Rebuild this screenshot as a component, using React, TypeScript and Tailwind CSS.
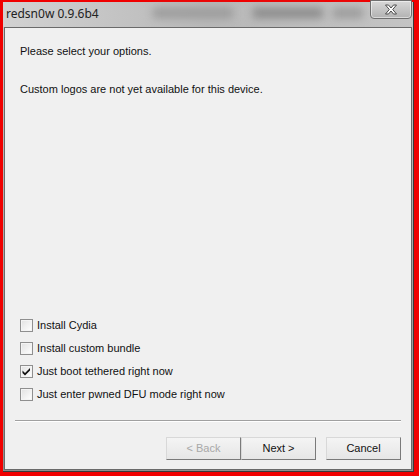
import React from "react";

const Check = ({ checked, label }: { checked?: boolean; label: string }) => (
  <div className="flex items-center h-[23px]">
    <div className="w-[13px] h-[13px] border border-[#8f8f8f] bg-gradient-to-br from-[#dcdcdc] to-[#ffffff] flex items-center justify-center">
      <div className="w-[11px] h-[11px] border border-[#f4f4f4] bg-gradient-to-br from-[#e4e4e4] to-[#fdfdfd] flex items-center justify-center">
        {checked && (
          <svg width="9" height="9" viewBox="0 0 9 9">
            <path d="M0.5 3.5 L3 6 L8 1 L8 3.5 L3 8.5 L0.5 6 Z" fill="#111" />
          </svg>
        )}
      </div>
    </div>
    <span className="ml-[4px] text-[11px] text-[#111]">{label}</span>
  </div>
);

const Btn = ({ children, disabled, w }: { children: React.ReactNode; disabled?: boolean; w: string }) => (
  <div
    className={`${w} h-[23px] flex items-center justify-center text-[11px] border border-t-[#d8d8d8] border-l-[#d8d8d8] border-r-[#7a7a7a] border-b-[#7a7a7a] bg-gradient-to-b from-[#f4f4f4] to-[#e6e6e6] ${
      disabled ? "text-[#a8a8a8]" : "text-[#111]"
    }`}
  >
    {children}
  </div>
);

export default function App() {
  return (
    <div
      className="w-[419px] h-[476px] bg-[#f00000] pl-[3px] pt-[2px] pr-[5px] pb-[4px]"
      style={{ fontFamily: '"Liberation Sans", Arial, sans-serif' }}
    >
      <div className="w-full h-full flex flex-col bg-gradient-to-b from-[#c9c9c9] via-[#a9a9a9] to-[#8e8e8e] border-r border-b border-[#3a3a3a]">
        {/* title bar */}
        <div className="relative h-[25px] flex items-center bg-gradient-to-r from-[#d2d2d2] via-[#b8b8b8] to-[#c4c4c4]">
          <div className="absolute left-[150px] top-[6px] w-[80px] h-[10px] bg-[#9a9a9a] blur-[4px]" />
          <div className="absolute left-[250px] top-[6px] w-[70px] h-[10px] bg-[#8a8a8a] blur-[4px]" />
          <div className="absolute left-[330px] top-[6px] w-[30px] h-[10px] bg-[#9a9a9a] blur-[4px]" />
          <span
            className="relative ml-[3px] mb-[1px] text-[12px] text-[#222]"
            style={{ fontFamily: '"Noto Sans", "Open Sans", sans-serif' }}
          >
            redsn0w 0.9.6b4
          </span>
          <div className="absolute right-[1px] top-[-2px] w-[42px] h-[19px] rounded-b-[4px] border border-[#6f6f6f] bg-gradient-to-b from-[#d8d8d8] to-[#b2b2b2] flex items-center justify-center shadow-[inset_0_0_0_1px_rgba(255,255,255,0.5)]">
            <svg width="14" height="11" viewBox="0 0 14 11">
              <path
                d="M1.5 1 L4.5 1 L7 4 L9.5 1 L12.5 1 L8.7 5.5 L12.5 10 L9.5 10 L7 7 L4.5 10 L1.5 10 L5.3 5.5 Z"
                fill="#ffffff"
                stroke="#4a4a4a"
                strokeWidth="1"
                strokeLinejoin="round"
              />
            </svg>
          </div>
        </div>
        {/* client */}
        <div className="flex-1 ml-[1px] mr-[1px] mb-[1px] border border-[#6a6a6a] bg-[#f0f0f0] flex flex-col">
          <div className="pl-[15px] pt-[15px] text-[11px] text-[#111]">Please select your options.</div>
          <div className="pl-[15px] pt-[21px] text-[11px] text-[#111]">
            Custom logos are not yet available for this device.
          </div>
          <div className="flex-1" />
          <div className="pl-[15px] flex flex-col">
            <Check label="Install Cydia" />
            <Check label="Install custom bundle" />
            <Check checked label="Just boot tethered right now" />
            <Check label="Just enter pwned DFU mode right now" />
          </div>
          <div className="mt-[14px] mx-[10px] h-[2px] border-t border-[#a0a0a0] border-b border-b-white" />
          <div className="flex justify-end pr-[10px] mt-[15px] mb-[9px]">
            <Btn disabled w="w-[75px]">&lt; Back</Btn>
            <Btn w="w-[75px]">Next &gt;</Btn>
            <div className="w-[10px]" />
            <Btn w="w-[75px]">Cancel</Btn>
          </div>
        </div>
      </div>
    </div>
  );
}
